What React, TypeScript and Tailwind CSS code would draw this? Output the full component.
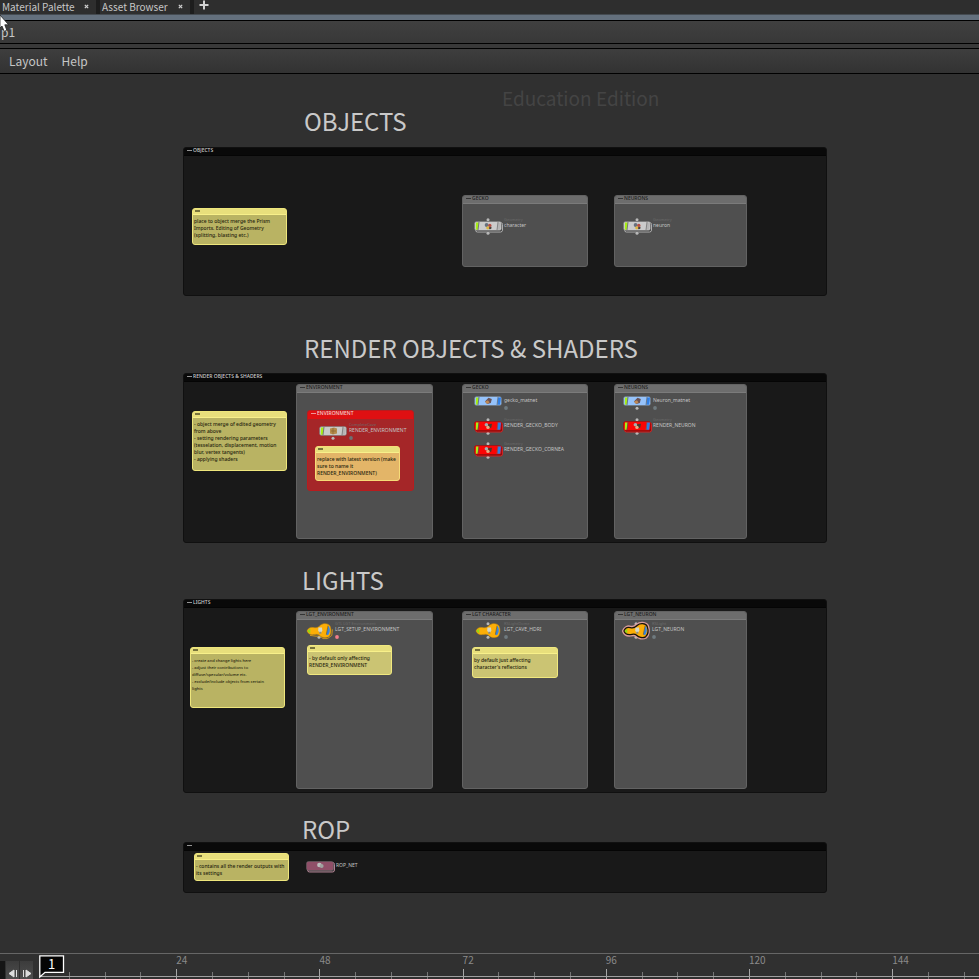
import type { ReactNode } from 'react';

// ---------------------------------------------------------------------------
// Types
// ---------------------------------------------------------------------------

interface Rect {
  x: number;
  y: number;
  w: number;
  h: number;
}

type BoxTone = 'black' | 'grey' | 'red';
type NoteTone = 'olive' | 'sand' | 'orange';
type NodeKind = 'geo' | 'cave' | 'matnet' | 'render' | 'rop' | 'light';

interface NetworkBoxData extends Rect {
  title: string;
  tone: BoxTone;
}

interface NoteData extends Rect {
  lines: string[];
  tone: NoteTone;
  small?: boolean;
}

interface NodeData {
  x: number;
  y: number;
  kind: NodeKind;
  name: string;
  type?: string;
  top?: boolean;
  bottom?: boolean;
  flag?: string;
  ring?: 'yellow' | 'pink';
}

// ---------------------------------------------------------------------------
// Network contents (canvas coordinates)
// ---------------------------------------------------------------------------

const TITLES = [
  { x: 304, y: 31, text: 'OBJECTS' },
  { x: 304, y: 258, text: 'RENDER OBJECTS & SHADERS' },
  { x: 302, y: 490, text: 'LIGHTS' },
  { x: 302, y: 739, text: 'ROP' },
];

const BOXES: NetworkBoxData[] = [
  { x: 183, y: 73, w: 644, h: 149, title: 'OBJECTS', tone: 'black' },
  { x: 462, y: 121, w: 126, h: 72, title: 'GECKO', tone: 'grey' },
  { x: 614, y: 121, w: 133, h: 72, title: 'NEURONS', tone: 'grey' },
  { x: 183, y: 299, w: 644, h: 170, title: 'RENDER OBJECTS & SHADERS', tone: 'black' },
  { x: 296, y: 310, w: 137, h: 155, title: 'ENVIRONMENT', tone: 'grey' },
  { x: 307, y: 336, w: 107, h: 81, title: 'ENVIRONMENT', tone: 'red' },
  { x: 462, y: 310, w: 126, h: 155, title: 'GECKO', tone: 'grey' },
  { x: 614, y: 310, w: 133, h: 155, title: 'NEURONS', tone: 'grey' },
  { x: 183, y: 525, w: 644, h: 194, title: 'LIGHTS', tone: 'black' },
  { x: 296, y: 537, w: 137, h: 178, title: 'LGT_ENVIRONMENT', tone: 'grey' },
  { x: 462, y: 537, w: 126, h: 178, title: 'LGT CHARACTER', tone: 'grey' },
  { x: 614, y: 537, w: 133, h: 178, title: 'LGT_NEURON', tone: 'grey' },
  { x: 183, y: 768, w: 644, h: 51, title: '', tone: 'black' },
];

const NOTES: NoteData[] = [
  {
    x: 192, y: 134, w: 95, h: 37, tone: 'olive',
    lines: ['place to object merge the Prism', 'Imports. Editing of Geometry', '(splitting, blasting etc.)'],
  },
  {
    x: 192, y: 337, w: 95, h: 60, tone: 'olive',
    lines: [
      '- object merge of edited geometry',
      'from above',
      '- setting rendering parameters',
      '(tesselation, displacement, motion',
      'blur, vertex tangents)',
      '- applying shaders',
    ],
  },
  {
    x: 315, y: 372, w: 85, h: 35, tone: 'orange',
    lines: ['replace with latest version (make', 'sure to name it', 'RENDER_ENVIRONMENT)'],
  },
  {
    x: 190, y: 573, w: 95, h: 61, tone: 'olive', small: true,
    lines: [
      '- create and change lights here',
      '- adjust their contributions to',
      'diffuse/specular/volume etc.',
      '- exclude/include objects from certain',
      'lights',
    ],
  },
  { x: 307, y: 571, w: 85, h: 30, tone: 'sand', lines: ['- by default only affecting', 'RENDER_ENVIRONMENT'] },
  { x: 472, y: 573, w: 86, h: 31, tone: 'sand', lines: ['by default just affecting', "character's reflections"] },
  { x: 194, y: 779, w: 95, h: 28, tone: 'olive', lines: ['- contains all the render outputs with', 'its settings'] },
];

const NODES: NodeData[] = [
  { x: 474, y: 144, kind: 'geo', name: 'character', type: 'Geometry', top: true, bottom: true },
  { x: 623, y: 144, kind: 'geo', name: 'neuron', type: 'Geometry', top: true, bottom: true },
  { x: 319, y: 349, kind: 'cave', name: 'RENDER_ENVIRONMENT', type: 'CompleteCave', bottom: true, flag: '#6d7072' },
  { x: 474, y: 319, kind: 'matnet', name: 'gecko_matnet', flag: '#6f7a7f' },
  { x: 474, y: 344, kind: 'render', name: 'RENDER_GECKO_BODY', type: 'Geometry', top: true, bottom: true },
  { x: 474, y: 368, kind: 'render', name: 'RENDER_GECKO_CORNEA', type: 'Geometry', top: true, bottom: true },
  { x: 623, y: 319, kind: 'matnet', name: 'Neuron_matnet', bottom: true, flag: '#6f7a7f' },
  { x: 623, y: 344, kind: 'render', name: 'RENDER_NEURON', type: 'Geometry', top: true, bottom: true },
  { x: 305, y: 548, kind: 'light', name: 'LGT_SETUP_ENVIRONMENT', type: 'GTL LGT Environment', bottom: true, flag: '#f27c8a', ring: 'yellow' },
  { x: 474, y: 548, kind: 'light', name: 'LGT_CAVE_HDRI', type: 'RSLightDome', top: true, bottom: true, flag: '#6f7a7f' },
  { x: 622, y: 548, kind: 'light', name: 'LGT_NEURON', type: 'RSLight', top: true, bottom: true, flag: '#6f7a7f', ring: 'pink' },
  { x: 306, y: 784, kind: 'rop', name: 'ROP_NET' },
];

const BOX_TONES: Record<BoxTone, { frame: string; header: string }> = {
  black: { frame: 'border-[#101010] bg-[#191919] text-[#d0d0d0]', header: 'bg-[#090909] border-[#050505]' },
  grey: { frame: 'border-[#626262] bg-[#4f4f4f] text-[#1c1c1c]', header: 'bg-[#6d6d6d] border-[#7b7b7b]' },
  red: { frame: 'border-[#b81c1e] bg-[#a52628] text-[#f0d0d0]', header: 'bg-[#df1012] border-[#df1012]' },
};

const NOTE_TONES: Record<NoteTone, string> = {
  olive: 'bg-[#b9b363] border-[#eee67c]',
  sand: 'bg-[#cbc473] border-[#f0e87e]',
  orange: 'bg-[#e3b568] border-[#f6dc78]',
};

// ---------------------------------------------------------------------------
// Canvas items
// ---------------------------------------------------------------------------

function NetworkBox({ x, y, w, h, title, tone }: NetworkBoxData) {
  const style = BOX_TONES[tone];
  return (
    <section
      className={`absolute overflow-hidden rounded-[3px] border ${style.frame}`}
      style={{ left: x, top: y, width: w, height: h }}
    >
      <header className={`flex h-2 items-start gap-px border-b pl-[3px] ${style.header}`}>
        <span className="mt-0.5 h-px w-[5px] bg-current opacity-70" />
        <h3 className="font-['Noto_Sans',sans-serif] text-[5px] leading-[5px] font-medium whitespace-nowrap">{title}</h3>
      </header>
    </section>
  );
}

function StickyNote({ x, y, w, h, lines, tone, small }: NoteData) {
  return (
    <article
      className={`absolute rounded-[3px] border text-[#25230e] ${NOTE_TONES[tone]}`}
      style={{ left: x, top: y, width: w, height: h }}
    >
      <div className="flex h-1.5 border-b border-[#f8f08a] bg-[#e8df7c] pt-px pl-0.5">
        <span className="h-0.5 w-[5px] bg-[#77733c]" />
      </div>
      <p
        className={`pt-[3px] pl-px font-['Noto_Sans',sans-serif] leading-[7px] font-medium whitespace-pre ${
          small ? 'text-[4px]' : 'text-[5px]'
        }`}
      >
        {lines.join('\n')}
      </p>
    </article>
  );
}

function TileShape({ kind }: { kind: NodeKind }) {
  const fills: Record<string, string> = {
    geo: '#cbcbcb',
    cave: '#c9c9c9',
    matnet: '#96c3fb',
    render: '#fb0505',
    rop: '#8f4f68',
  };
  const edges: Record<string, string> = {
    geo: '#b9b9b9',
    cave: '#7d3436',
    matnet: '#6b97cf',
    render: '#e02020',
    rop: '#c08b9e',
  };
  const flagged = kind === 'matnet' || kind === 'render';
  return (
    <g>
      {(kind === 'geo' || kind === 'render' || kind === 'rop') && (
        <rect x="1.5" y="4.5" width="27" height="9.5" rx="2" fill={kind === 'render' ? '#7b1111' : '#3a3a3a'} stroke={edges[kind]} strokeWidth="0.9" />
      )}
      <rect x="0.5" y="3.5" width="27" height="9" rx="2" fill={fills[kind]} stroke={kind === 'render' ? '#8c0c0c' : '#6a6a6a'} strokeWidth="0.5" />
      {kind !== 'rop' && (
        <>
          <path d="M2 4.5h2.6l-.9 7.2H1.8z" fill="#a7ee16" />
          <path d="M5 4l-1 8" stroke="#555" strokeWidth="0.7" />
          <path d="M24 4.5h3l-.8 7.2h-2.9z" fill={flagged ? '#2f7fe6' : '#b5b5b5'} />
          <path d="M24 4l-1 8" stroke="#666" strokeWidth="0.7" />
        </>
      )}
      {kind === 'cave' && (
        <>
          <path d="M11 5.5l4-1 3 1v5l-4 1-3-1z" fill="#b58b4b" />
          <path d="M12 8h5M14 5v6" stroke="#80602e" strokeWidth="0.6" />
        </>
      )}
      {kind === 'geo' && (
        <>
          <circle cx="12.6" cy="7" r="1.9" fill="#66707d" />
          <circle cx="15.8" cy="7.4" r="1.7" fill="#b64f43" />
          <circle cx="13.8" cy="9.8" r="1.6" fill="#ddb642" />
          <path d="M15 9.2l2.6-.4-.4 2.2-2 .3z" fill="#49423d" />
        </>
      )}
      {kind === 'render' && (
        <>
          <circle cx="12.4" cy="6.7" r="1.8" fill="#a7adb0" />
          <path d="M14 6.3l4-.5-.7 3.6-2.5 1z" fill="#48392d" />
          <circle cx="14" cy="9.4" r="1.7" fill="#e8ac82" />
        </>
      )}
      {kind === 'matnet' && (
        <>
          <path d="M11 8.5l3.5-3.8 3.3 1.4-1 4-3.5 1z" fill="#695356" />
          <path d="M11 8.8l3-1.6 1.5 2.2-2.5 1.5z" fill="#c08a55" />
        </>
      )}
      {kind === 'rop' && (
        <>
          <circle cx="13.4" cy="7" r="2.3" fill="#bdbdbd" />
          <circle cx="15.6" cy="8" r="2" fill="#9fa39f" />
        </>
      )}
    </g>
  );
}

function LightShape({ ring }: { ring?: 'yellow' | 'pink' }) {
  const outline =
    'M2 9C3 6.2 5.6 4.8 8.4 5.6C11 6.4 13.4 5.4 15.4 3.2C18 1 23.8 1 25.2 4.400C26.400 8 26.200 12.600 23.600 14.800C20.500 16.400 16.600 15.400 14.600 13.200C13 11.800 11 12 8.600 12.600C5.600 13 3 11.800 2 9z';
  return (
    <g>
      {ring === 'pink' && <path d={outline} fill="none" stroke="#d99c9c" strokeWidth="4" />}
      {ring === 'yellow' && <path d="M5 13.400l6 .8 4-.2 3 2.600h4.4l4.4-3.200.6-6" fill="none" stroke="#e8a612" strokeWidth="0.8" />}
      <path d={outline} fill="#fcae07" stroke={ring === 'pink' ? '#17120a' : '#d69202'} strokeWidth={ring === 'pink' ? 1.3 : 0.5} />
      <path d="M2.4 9l3-2.4-.2 4.8z" fill="#8fdb16" />
      <path d="M23.4 3.8c2 2.6 1.8 6.8-.4 9.4l-1.8-.6z" fill="#3585e4" />
      <path d="M23 3.6l-1.6 9" stroke="#675020" strokeWidth="0.6" />
      <path d="M13.4 5.4h3.6l.3 3-1 2h-2.1l-1-2z" fill="#d6d7c5" />
      <path d="M14.3 9.8h2v1.9h-2z" fill="#8e8d80" />
    </g>
  );
}

function NetworkNode({ x, y, kind, name, type, top, bottom, flag, ring }: NodeData) {
  return (
    <div className="absolute flex" style={{ left: x, top: y }}>
      <svg viewBox="0 0 36 20" className="h-5 w-9 shrink-0 overflow-visible" aria-hidden="true">
        {top && <circle cx="14" cy="1.7" r="1.5" fill="#b9b9b9" />}
        {bottom && <circle cx="14" cy="15.3" r="1.5" fill="#b9b9b9" />}
        {kind === 'light' ? <LightShape ring={ring} /> : <TileShape kind={kind} />}
        {flag && <circle cx="32" cy="15" r="1.9" fill={flag} />}
      </svg>
      <div className="-ml-1.5 flex flex-col font-['Noto_Sans',sans-serif] whitespace-nowrap">
        <span className="h-1 text-[4px] leading-[4px] text-[#6b6b6b]">{type}</span>
        <span className="text-[5px] leading-[7px] text-[#c4c4c4]">{name}</span>
      </div>
    </div>
  );
}

// ---------------------------------------------------------------------------
// Window bars
// ---------------------------------------------------------------------------

function PaneTab({ children }: { children: ReactNode }) {
  return (
    <div className="flex items-start justify-between border-r-4 border-[#1d1d1d] bg-[#2e2e2e] pr-1.5 pl-0.5">
      <button type="button" className="text-[10px] leading-[14px] text-[#c6c6c6]">{children}</button>
      <button type="button" aria-label="Close tab" className="flex h-3 w-2 items-center justify-center">
        <svg viewBox="0 0 6 6" className="size-[5px]" aria-hidden="true">
          <path d="M1 1l4 4M5 1L1 5" stroke="#cfcfcf" strokeWidth="1.5" />
        </svg>
      </button>
    </div>
  );
}

function TopBars() {
  return (
    <header className="relative">
      <div className="grid h-3.5 grid-cols-[100px_94px_auto] bg-[#2e2e2e]">
        <PaneTab>Material Palette</PaneTab>
        <PaneTab>Asset Browser</PaneTab>
        <button type="button" aria-label="New tab" className="flex w-5 items-start pl-[5px]">
          <svg viewBox="0 0 10 10" className="size-2.5" aria-hidden="true">
            <path d="M5 .5v9M.5 5h9" stroke="#d2d2d2" strokeWidth="2" />
          </svg>
        </button>
      </div>
      <div className="h-1.5 border-t border-[#454b51] bg-[#64707d]" />
      <div className="flex h-6 items-center border-y border-black bg-linear-to-b from-[#404040] to-[#383838] pl-px text-[12px] leading-5 text-[#c6c6c6]">
        <span>p1</span>
      </div>
      <div className="h-1 bg-[#393939]" />
      <nav className="flex h-[26px] items-center gap-3.5 border-y border-black bg-linear-to-b from-[#3e3e3e] to-[#323232] pl-[9px] text-[12px] leading-5 text-[#c6c6c6]">
        <button type="button">Layout</button>
        <button type="button">Help</button>
      </nav>
      <svg viewBox="0 0 10 20" className="absolute top-3.5 left-0 h-5 w-2.5" aria-hidden="true">
        <path d="M0 1l8.6 9.8H4.8l2 5.4-2.6 1.2L2 12l-2 2z" fill="#fff" stroke="#222" strokeWidth="0.8" />
      </svg>
    </header>
  );
}

// ---------------------------------------------------------------------------
// Timeline
// ---------------------------------------------------------------------------

const FRAMES_SHOWN = 157.5;
const TICK_STEP = 6;
const TICKS = Array.from({ length: 26 }, (_, i) => (i + 1) * TICK_STEP);

const share = (frames: number) => `${(frames / FRAMES_SHOWN) * 100}%`;

function Timeline() {
  return (
    <footer className="flex h-[26px] overflow-hidden border-t border-[#666] bg-[#303030]">
      <div className="flex w-[39px] shrink-0 items-end gap-px">
        <span className="h-[18px] w-[5px] bg-[#151515]" />
        <button type="button" aria-label="Previous frame" className="flex h-[18px] w-[13px] items-end justify-center bg-linear-to-b from-[#3c3c3c] to-[#4e4e4e] pb-px">
          <svg viewBox="0 0 10 9" className="h-[9px] w-2.5" aria-hidden="true">
            <path d="M6 1v7L1 4.5zM8.5 1v7" fill="#ddd" stroke="#ddd" strokeWidth="1" />
          </svg>
        </button>
        <button type="button" aria-label="Next frame" className="flex h-[18px] w-[13px] items-end justify-center bg-linear-to-b from-[#3c3c3c] to-[#4e4e4e] pb-px">
          <svg viewBox="0 0 10 9" className="h-[9px] w-2.5" aria-hidden="true">
            <path d="M4 1v7l5-3.5zM1.5 1v7" fill="#ddd" stroke="#ddd" strokeWidth="1" />
          </svg>
        </button>
      </div>
      <div className="relative min-w-0 flex-1">
        <div className="flex h-full">
          <div className="shrink-0" style={{ width: share(TICK_STEP - 1) }} />
          {TICKS.map((frame) => (
            <div
              key={frame}
              className="flex shrink-0 items-end text-[10px] leading-3 text-[#8a8a8a]"
              style={{ width: share(TICK_STEP) }}
            >
              <span className={`w-px ${frame % 24 === 0 ? 'h-2.5 bg-[#a8a8a8]' : 'h-[7px] bg-[#777]'}`} />
              {frame % 24 === 0 && <span className="-ml-px self-start">{frame}</span>}
            </div>
          ))}
        </div>
        <div className="absolute inset-x-0 bottom-0.5 h-px bg-[#a0a0a0]" />
        <svg viewBox="0 0 26 24" className="absolute top-px left-0 h-6 w-[26px]" aria-hidden="true">
          <path d="M.8.8H24.5V17.3H6L.8 22z" fill="#050505" stroke="#fff" strokeWidth="1.3" />
        </svg>
        <span className="absolute top-px left-[9px] text-[13px] leading-[18px] text-white">1</span>
      </div>
    </footer>
  );
}

// ---------------------------------------------------------------------------
// Page
// ---------------------------------------------------------------------------

export default function App() {
  return (
    <div className="flex h-screen flex-col overflow-hidden bg-[#303030] font-['Noto_Sans_CJK_SC','Noto_Sans',sans-serif]">
      <TopBars />
      <main className="relative min-h-0 flex-1 overflow-hidden bg-[#303030]">
        <p className="absolute top-3 left-[502px] text-[19px] leading-6 whitespace-nowrap text-[#444]">
          Education Edition
        </p>
        {TITLES.map((title) => (
          <h2
            key={title.text}
            className="absolute text-[24px] leading-8 whitespace-nowrap text-[#c9c9c9]"
            style={{ left: title.x, top: title.y }}
          >
            {title.text}
          </h2>
        ))}
        {BOXES.map((box) => (
          <NetworkBox key={`${box.x}-${box.y}`} {...box} />
        ))}
        {NOTES.map((note) => (
          <StickyNote key={`${note.x}-${note.y}`} {...note} />
        ))}
        {NODES.map((node) => (
          <NetworkNode key={`${node.x}-${node.y}`} {...node} />
        ))}
      </main>
      <Timeline />
    </div>
  );
}
